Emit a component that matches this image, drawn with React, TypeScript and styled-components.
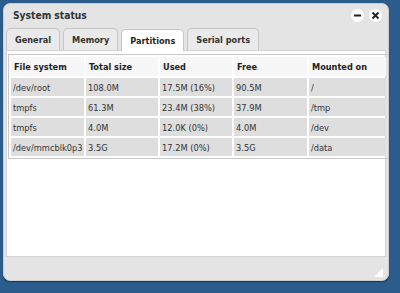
import React from "react";
import styled, { createGlobalStyle } from "styled-components";

const Global = createGlobalStyle`
  html, body { margin: 0; padding: 0; }
  body {
    background: #2a5d8c;
    width: 400px;
    height: 293px;
    overflow: hidden;
    font-family: "DejaVu Sans Condensed", Tahoma, "DejaVu Sans", sans-serif;
  }
  #root { padding: 3px; }
`;

const Window = styled.div`
  width: 386px;
  height: 278px;
  box-sizing: border-box;
  background: #e4e4e4;
  border: 1px solid #cdcdcd;
  border-radius: 7px;
  padding: 0 2px;
  display: flex;
  flex-direction: column;
  box-shadow: 0 1px 1px rgba(0, 0, 0, 0.4);
`;

const TitleBar = styled.div`
  height: 23px;
  display: flex;
  align-items: center;
  padding-left: 7px;
  padding-right: 4px;
`;

const Title = styled.div`
  flex: 1;
  font-weight: bold;
  font-size: 10.2px;
  color: #333;
`;

const RoundButton = styled.button`
  width: 13px;
  height: 13px;
  border-radius: 50%;
  background: #fff;
  border: none;
  padding: 0;
  margin-left: 5px;
  display: flex;
  align-items: center;
  justify-content: center;
`;

const TabRow = styled.div`
  display: flex;
  gap: 3px;
  height: 23px;
  align-items: flex-end;
`;

const Tab = styled.div<{ $active?: boolean }>`
  height: 22px;
  box-sizing: border-box;
  padding: 0 8px;
  display: flex;
  align-items: center;
  font-weight: bold;
  font-size: 9.1px;
  color: ${(p) => (p.$active ? "#1f1f1f" : "#333")};
  background: ${(p) => (p.$active ? "#fff" : "#eaeaea")};
  border: 1px solid #c5c5c5;
  border-bottom: none;
  border-radius: 5px 5px 0 0;
  margin-bottom: ${(p) => (p.$active ? -1 : 0)}px;
  position: relative;
`;

const Panel = styled.div`
  flex: 1;
  background: #fff;
  border: 1px solid #d3d3d3;
  padding: 3px 1px;
`;

const Table = styled.table`
  width: 100%;
  table-layout: fixed;
  border-collapse: separate;
  border-spacing: 2px;
  border: 1px solid #c9c9c9;
  font-size: 9.2px;
  color: #333;
`;

const Col = styled.col<{ $w: number }>`
  width: ${(p) => p.$w}px;
`;

const Th = styled.th`
  text-align: left;
  font-weight: bold;
  font-size: 9.1px;
  color: #222;
  background: #f7f7f7;
  height: 19px;
  padding: 0 2px 0 3px;
  white-space: nowrap;
  overflow: hidden;
`;

const Td = styled.td`
  background: #dedede;
  height: 18px;
  padding: 0 1px 0 2px;
  white-space: nowrap;
  overflow: hidden;
`;

const Footer = styled.div`
  height: 20px;
  display: flex;
  justify-content: flex-end;
  align-items: flex-end;
  padding: 0 3px 3px 0;
`;

const cols = [
  ["File system", 73],
  ["Total size", 72],
  ["Used", 72],
  ["Free", 73],
  ["Mounted on", 77],
] as const;

const rows = [
  ["/dev/root", "108.0M", "17.5M (16%)", "90.5M", "/"],
  ["tmpfs", "61.3M", "23.4M (38%)", "37.9M", "/tmp"],
  ["tmpfs", "4.0M", "12.0K (0%)", "4.0M", "/dev"],
  ["/dev/mmcblk0p3", "3.5G", "17.2M (0%)", "3.5G", "/data"],
];

export default function App() {
  return (
    <>
      <Global />
      <Window>
        <TitleBar>
          <Title>System status</Title>
          <RoundButton aria-label="minimize">
            <svg width="9" height="9" viewBox="0 0 9 9">
              <rect x="1" y="3.5" width="7" height="2" fill="#222" />
            </svg>
          </RoundButton>
          <RoundButton aria-label="close">
            <svg width="9" height="9" viewBox="0 0 9 9">
              <path d="M1.5 1.5 L7.5 7.5 M7.5 1.5 L1.5 7.5" stroke="#222" strokeWidth="1.8" />
            </svg>
          </RoundButton>
        </TitleBar>
        <TabRow>
          <Tab>General</Tab>
          <Tab>Memory</Tab>
          <Tab $active>Partitions</Tab>
          <Tab>Serial ports</Tab>
        </TabRow>
        <Panel>
          <Table>
            <colgroup>
              {cols.map(([c, w]) => (
                <Col key={c} $w={w} />
              ))}
            </colgroup>
            <thead>
              <tr>
                {cols.map(([c]) => (
                  <Th key={c}>{c}</Th>
                ))}
              </tr>
            </thead>
            <tbody>
              {rows.map((r, i) => (
                <tr key={i}>
                  {r.map((c, j) => (
                    <Td key={j}>{c}</Td>
                  ))}
                </tr>
              ))}
            </tbody>
          </Table>
        </Panel>
        <Footer>
          <svg width="9" height="9" viewBox="0 0 9 9">
            <path d="M9 0 L9 9 L0 9 Z" fill="#fff" />
          </svg>
        </Footer>
      </Window>
    </>
  );
}
